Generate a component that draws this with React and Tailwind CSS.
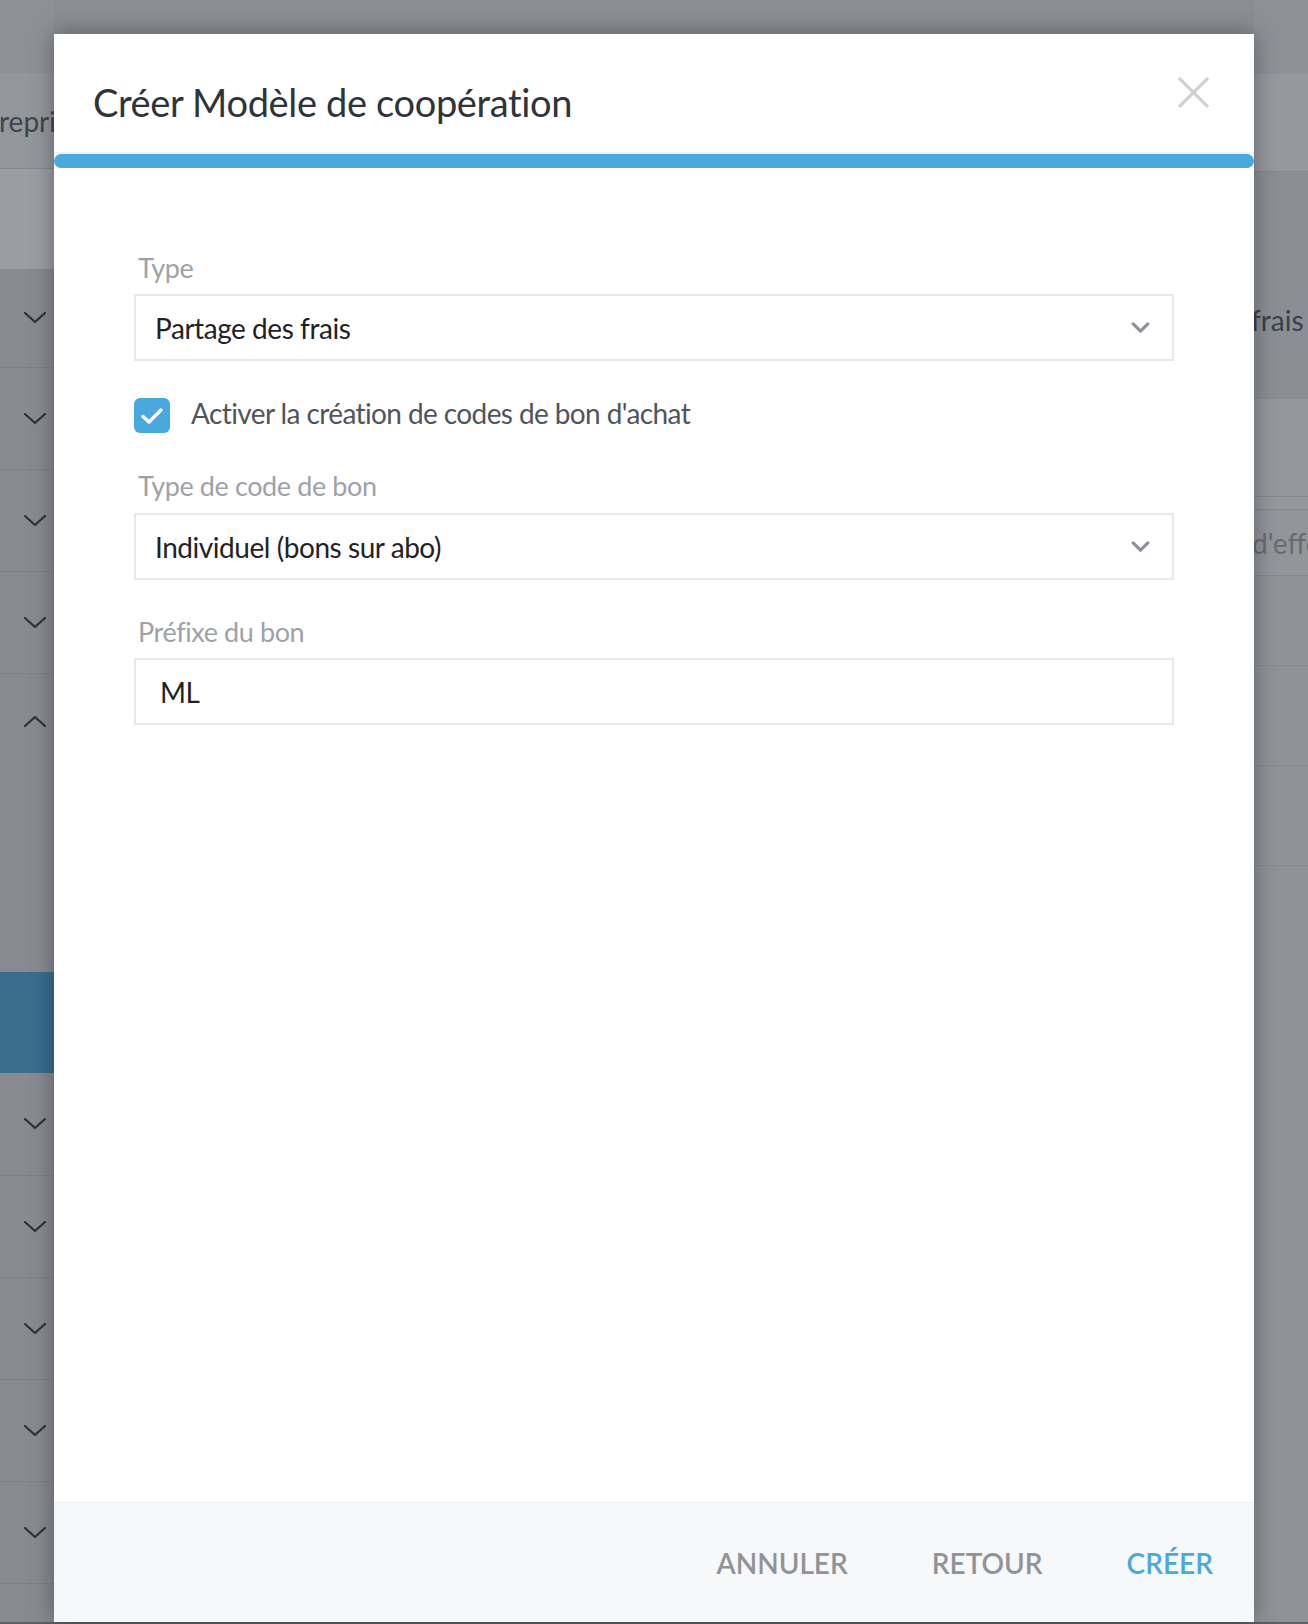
import React from "react";

const font = { fontFamily: "Lato, 'Open Sans', sans-serif" };

const Chevron = ({ up }) => (
  <svg viewBox="0 0 22 12" className="w-[22px] h-[12px]" fill="none" stroke="#2e3138" strokeWidth="2.2" strokeLinecap="round" strokeLinejoin="round">
    {up ? <polyline points="1,11 11,2 21,11" /> : <polyline points="1,1 11,10 21,1" />}
  </svg>
);

const LeftRow = ({ h = "h-[102px]" }) => (
  <div className={`${h} border-b border-[#7d8087] flex items-center justify-end pr-[8px]`}>
    <Chevron />
  </div>
);

const SelectBox = ({ value }) => (
  <div className="h-[67px] border-2 border-[#e8e8e8] flex items-center justify-between pl-[19px] pr-[22px]">
    <span className="text-[28px] leading-[34px] tracking-[-0.45px] text-[#1f2328]">{value}</span>
    <svg viewBox="0 0 20 13" className="w-[19px] h-[12px]" fill="none" stroke="#8e9198" strokeWidth="3.4" strokeLinecap="round" strokeLinejoin="round">
      <polyline points="2,2 10,10 18,2" />
    </svg>
  </div>
);

const Label = ({ children, className = "" }) => (
  <div className={`text-[27px] leading-[34px] tracking-[-0.4px] text-[#9ea2a8] pl-[4px] ${className}`}>{children}</div>
);

export default function App() {
  return (
    <div className="relative w-[1308px] h-[1624px] overflow-hidden bg-[#8a8d93]" style={font}>
      {/* page behind the overlay */}
      <div className="flex w-full h-full">
        <div className="w-[54px] flex flex-col">
          <div className="h-[74px] bg-[#8d9095]" />
          <div className="h-[98px] bg-[#93969b] border-b border-[#84878d] flex items-center overflow-hidden">
            <span className="text-[28px] text-[#40444b] whitespace-nowrap -ml-[1px]">repri</span>
          </div>
          <div className="h-[101px] bg-[#9a9da2]" />
          <div className="bg-[#878a91] flex flex-col">
            <LeftRow h="h-[99px]" />
            <LeftRow />
            <LeftRow />
            <LeftRow />
            <div className="h-[298px] flex items-start justify-end pr-[8px] pt-[41px]">
              <Chevron up />
            </div>
            <div className="h-[101px] bg-[#3b6e8e]" />
            <LeftRow h="h-[103px]" />
            <LeftRow />
            <LeftRow />
            <LeftRow />
            <LeftRow />
            <div className="h-[40px]" />
          </div>
        </div>
        <div className="flex-1" />
        <div className="w-[54px] flex flex-col">
          <div className="h-[74px] bg-[#8d9095]" />
          <div className="h-[98px] bg-[#95989d] border-b border-[#85888e]" />
          <div className="h-[227px] bg-[#8b8e94] flex items-start pt-[131px] overflow-hidden">
            <span className="text-[28px] leading-[34px] text-[#3c4047] whitespace-nowrap -ml-[3px]">frais</span>
          </div>
          <div className="h-[98px] bg-[#94979c] border-b border-[#85888e]" />
          <div className="h-[13px] bg-[#94979c] border-b border-[#85888e]" />
          <div className="h-[66px] bg-[#92959a] border-b border-[#85888e] flex items-center overflow-hidden">
            <span className="text-[28px] text-[#686b71] whitespace-nowrap -ml-[2px]">d'effet</span>
          </div>
          <div className="h-[90px] bg-[#8f9297] border-b border-[#878a90]" />
          <div className="h-[100px] bg-[#8f9297] border-b border-[#878a90]" />
          <div className="h-[100px] bg-[#8f9297] border-b border-[#878a90]" />
          <div className="flex-1 bg-[#8f9297]" />
        </div>
      </div>
      <div className="absolute left-0 right-0 bottom-0 h-[2px] bg-[#5d6066]" />

      {/* modal */}
      <div className="absolute left-[54px] top-[34px] w-[1200px] h-[1588px] bg-white flex flex-col shadow-[0_0_22px_rgba(0,0,0,0.35)]">
        <div className="h-[118px] flex items-start justify-between pl-[39px] pr-[45px]">
          <h1 className="mt-[45px] text-[38px] leading-[46px] tracking-[-0.35px] text-[#2f333a] font-normal">Créer Modèle de coopération</h1>
          <svg viewBox="0 0 32 32" className="mt-[43px] w-[31px] h-[31px]" fill="none" stroke="#d0d0d0" strokeWidth="3.2">
            <line x1="1" y1="1" x2="31" y2="31" />
            <line x1="31" y1="1" x2="1" y2="31" />
          </svg>
        </div>
        <div className="h-[2px] bg-[#eef0f2]" />
        <div className="h-[14px] bg-[#4aa9dc] rounded-full" />

        <div className="flex-1 px-[80px] pt-[83px]">
          <Label>Type</Label>
          <div className="mt-[9px]">
            <SelectBox value="Partage des frais" />
          </div>

          <div className="mt-[37px] flex items-start gap-[21px]">
            <div className="w-[36px] h-[35px] rounded-[6px] bg-[#4aa9dc] flex items-center justify-center">
              <svg viewBox="0 0 24 24" className="w-[24px] h-[24px]" fill="none" stroke="white" strokeWidth="3.4" strokeLinecap="round" strokeLinejoin="round">
                <polyline points="3,12.5 9,18 21,6" />
              </svg>
            </div>
            <span className="-mt-[2px] text-[28px] leading-[34px] tracking-[-0.6px] text-[#50555c]">Activer la création de codes de bon d'achat</span>
          </div>

          <Label className="mt-[36px]">Type de code de bon</Label>
          <div className="mt-[10px]">
            <SelectBox value="Individuel (bons sur abo)" />
          </div>

          <Label className="mt-[35px]">Préfixe du bon</Label>
          <div className="mt-[9px] h-[67px] border-2 border-[#e8e8e8] flex items-center pl-[24px]">
            <span className="text-[28px] leading-[34px] tracking-[-0.45px] text-[#1f2328]">ML</span>
          </div>
        </div>

        <div className="h-[120px] bg-[#f7f8fa] border-t border-[#eef0f2] flex items-center justify-end gap-[84px] pr-[41px]">
          <button className="text-[28px] leading-[36px] font-semibold text-[#909398]">ANNULER</button>
          <button className="text-[28px] leading-[36px] font-semibold text-[#909398]">RETOUR</button>
          <button className="text-[28px] leading-[36px] font-semibold text-[#4aa9dc]">CRÉER</button>
        </div>
      </div>
    </div>
  );
}
